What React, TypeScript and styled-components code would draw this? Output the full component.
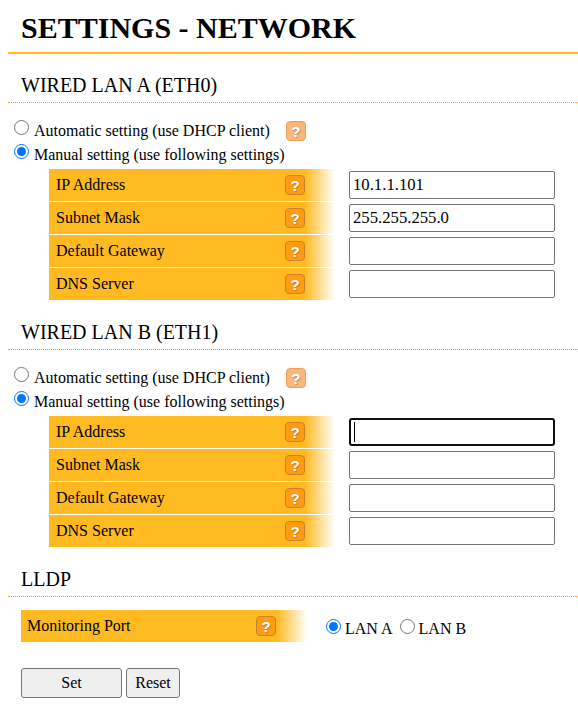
import React from 'react';
import styled, { createGlobalStyle } from 'styled-components';

const GlobalStyle = createGlobalStyle`
  html, body {
    margin: 0;
    padding: 0;
    background: #fff;
    color: #000;
    font-family: "Liberation Serif", "Times New Roman", serif;
    font-size: 16px;
  }
`;

const Page = styled.div`
  width: 578px;
  height: 718px;
  padding-left: 8px;
  box-sizing: border-box;
  overflow: hidden;
`;

const Title = styled.h1`
  margin: 0;
  height: 54px;
  box-sizing: border-box;
  padding: 9px 0 0 13px;
  border-bottom: 2px solid #ffba22;
  font-size: 30px;
  line-height: 37px;
  font-weight: bold;
`;

const Section = styled.section`
  display: flex;
  flex-direction: column;

  & + & {
    margin-top: 1px;
  }
`;

const SectionHeading = styled.h2`
  margin: 0;
  height: 28px;
  padding: 20px 0 0 13px;
  border-bottom: 1px dotted #f09a20;
  font-size: 20px;
  line-height: 22px;
  font-weight: normal;
`;

const RadioGroup = styled.div`
  display: flex;
  flex-direction: column;
  margin-top: 12px;
`;

const RadioLine = styled.div`
  display: flex;
  align-items: center;
  height: 24px;
  padding-left: 6px;
`;

const RadioInput = styled.input.attrs({ type: 'radio' })`
  width: 15px;
  height: 15px;
  margin: 0 5px 0 0;
  flex: none;
`;

const RadioText = styled.label`
  margin-top: 8px;
  line-height: 18px;
`;

const HelpButton = styled.span<{ $faded?: boolean }>`
  display: flex;
  align-items: center;
  justify-content: center;
  flex: none;
  width: 20px;
  height: 20px;
  box-sizing: border-box;
  border: 1px solid ${(p) => (p.$faded ? '#e8a060' : '#c9812a')};
  border-radius: 4px;
  background: ${(p) => (p.$faded ? '#fdb877' : '#ff9c14')};
  color: #fff;
  font-family: "Liberation Sans", Arial, sans-serif;
  font-size: 15px;
  font-weight: bold;
  line-height: 1;
  text-shadow: ${(p) => (p.$faded ? '1px 1px 1px #999' : '1px 1px 1px #c9812a')};
`;

const AutoHelp = styled(HelpButton)`
  margin: 8px 0 0 16px;
`;

const FieldTable = styled.div`
  display: flex;
  flex-direction: column;
  gap: 1px;
  padding-left: 41px;
  margin-top: 6px;
`;

const FieldRow = styled.div`
  display: flex;
  align-items: center;
  height: 32px;
`;

const FieldLabel = styled.div<{ $tight?: boolean }>`
  display: flex;
  align-items: center;
  justify-content: space-between;
  width: 286px;
  height: 100%;
  box-sizing: border-box;
  padding: ${(p) => (p.$tight ? '0 31px 0 6px' : '0 30px 0 7px')};
  background: linear-gradient(to right, #ffba22 89.5%, #ffffff 100%);
`;

const InputWrap = styled.div`
  position: relative;
  display: flex;
  margin-left: 14px;
`;

const TextInput = styled.input.attrs({ type: 'text' })`
  width: 206px;
  height: 28px;
  padding: 0 3px;
  box-sizing: border-box;
  border: 1px solid #767676;
  border-radius: 2px;
  background: #fff;
  color: #000;
  font-family: "Liberation Serif", "Times New Roman", serif;
  font-size: 16.7px;

  &:focus {
    padding: 0 2px;
    border: 2px solid #101010;
    border-radius: 3px;
    outline: none;
  }
`;

const Caret = styled.span`
  position: absolute;
  left: 5px;
  top: 4px;
  width: 1px;
  height: 20px;
  background: #000;
`;

const MonitorRow = styled.div`
  display: flex;
  align-items: center;
  height: 32px;
  margin: 13px 0 0 13px;
`;

const MonitorOptions = styled.div`
  display: flex;
  align-items: center;
  margin-left: 19px;
  gap: 7px;
`;

const MonitorOption = styled.span`
  display: flex;
  align-items: center;
`;

const MonitorRadio = styled(RadioInput)`
  margin: 0 4px 0 0;
`;

const MonitorText = styled.label`
  margin-top: 6px;
`;

const ButtonBar = styled.div`
  display: flex;
  gap: 4px;
  margin: 26px 0 0 13px;
`;

const FormButton = styled.button<{ $wide?: boolean }>`
  width: ${(p) => (p.$wide ? '101px' : '54px')};
  height: 30px;
  padding: 0;
  border: 1px solid #767676;
  border-radius: 3px;
  background: #efefef;
  color: #000;
  font-family: "Liberation Serif", "Times New Roman", serif;
  font-size: 16px;
`;

type Field = {
  label: string;
  value?: string;
  focused?: boolean;
};

type LanSectionProps = {
  title: string;
  name: string;
  fields: Field[];
};

const LanSection: React.FC<LanSectionProps> = ({ title, name, fields }) => (
  <Section>
    <SectionHeading>{title}</SectionHeading>
    <RadioGroup>
      <RadioLine>
        <RadioInput name={name} />
        <RadioText>Automatic setting (use DHCP client)</RadioText>
        <AutoHelp $faded>?</AutoHelp>
      </RadioLine>
      <RadioLine>
        <RadioInput name={name} defaultChecked />
        <RadioText>Manual setting (use following settings)</RadioText>
      </RadioLine>
    </RadioGroup>
    <FieldTable>
      {fields.map((field) => (
        <FieldRow key={field.label}>
          <FieldLabel>
            <span>{field.label}</span>
            <HelpButton>?</HelpButton>
          </FieldLabel>
          <InputWrap>
            <TextInput defaultValue={field.value} autoFocus={field.focused} />
            {field.focused && <Caret />}
          </InputWrap>
        </FieldRow>
      ))}
    </FieldTable>
  </Section>
);

const App: React.FC = () => {
  return (
    <Page>
      <GlobalStyle />
      <Title>SETTINGS - NETWORK</Title>
      <LanSection
        title="WIRED LAN A (ETH0)"
        name="lan-a"
        fields={[
          { label: 'IP Address', value: '10.1.1.101' },
          { label: 'Subnet Mask', value: '255.255.255.0' },
          { label: 'Default Gateway' },
          { label: 'DNS Server' },
        ]}
      />
      <LanSection
        title="WIRED LAN B (ETH1)"
        name="lan-b"
        fields={[
          { label: 'IP Address', focused: true },
          { label: 'Subnet Mask' },
          { label: 'Default Gateway' },
          { label: 'DNS Server' },
        ]}
      />
      <Section>
        <SectionHeading>LLDP</SectionHeading>
        <MonitorRow>
          <FieldLabel $tight>
            <span>Monitoring Port</span>
            <HelpButton>?</HelpButton>
          </FieldLabel>
          <MonitorOptions>
            <MonitorOption>
              <MonitorRadio name="lldp" defaultChecked />
              <MonitorText>LAN A</MonitorText>
            </MonitorOption>
            <MonitorOption>
              <MonitorRadio name="lldp" />
              <MonitorText>LAN B</MonitorText>
            </MonitorOption>
          </MonitorOptions>
        </MonitorRow>
        <ButtonBar>
          <FormButton $wide>Set</FormButton>
          <FormButton>Reset</FormButton>
        </ButtonBar>
      </Section>
    </Page>
  );
};

export default App;
